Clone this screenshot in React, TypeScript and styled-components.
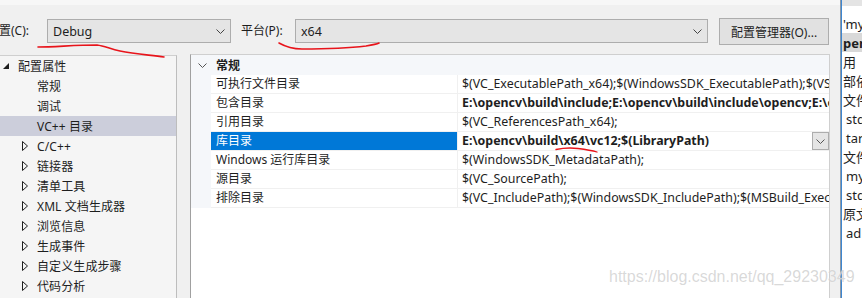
import React from "react";
import styled, { createGlobalStyle } from "styled-components";

const FONT = `"Noto Sans", "Noto Sans CJK SC", sans-serif`;

const Global = createGlobalStyle`
  html, body { margin: 0; padding: 0; background: #f0f0f0; }
  body { font-family: ${FONT}; }
`;

const Page = styled.div`
  position: relative;
  width: 862px;
  height: 298px;
  overflow: hidden;
  display: flex;
  background: #f0f0f0;
  font-family: ${FONT};
  font-size: 12px;
  color: #1e1e1e;
`;

const Main = styled.div`
  width: 840px;
  flex: none;
  display: flex;
  flex-direction: column;
`;

const TopStrip = styled.div`
  height: 5px;
  background: #f7f7f7;
`;

const TopBar = styled.div`
  height: 49px;
  box-sizing: border-box;
  padding-top: 14px;
  display: flex;
  align-items: flex-start;
`;

const Label = styled.div<{ $ml: number; $w: number }>`
  margin-left: ${(p) => p.$ml}px;
  width: ${(p) => p.$w}px;
  flex: none;
  height: 24px;
  line-height: 24px;
  white-space: nowrap;
`;

const Combo = styled.div<{ $w: number }>`
  width: ${(p) => p.$w}px;
  flex: none;
  height: 24px;
  box-sizing: border-box;
  border: 1px solid #adadad;
  background: #e5e5e5;
  display: flex;
  align-items: center;
  padding: 0 5px 0 5px;
  font-size: 12.5px;
`;

const ComboText = styled.span`
  flex: 1;
`;

const Button = styled.div<{ $ml: number }>`
  margin-left: ${(p) => p.$ml}px;
  margin-top: -1px;
  width: 110px;
  height: 27px;
  flex: none;
  box-sizing: border-box;
  border: 1px solid #adadad;
  background: #e1e1e1;
  display: flex;
  align-items: center;
  justify-content: center;
  white-space: nowrap;
`;

const Body = styled.div`
  display: flex;
  align-items: flex-start;
  height: 244px;
`;

const TreePanel = styled.div`
  margin-top: 1px;
  width: 177px;
  height: 243px;
  flex: none;
  box-sizing: border-box;
  border-top: 1px solid #cfcfcf;
  border-right: 1px solid #bdbdbd;
  background: #f5f5f5;
`;

const TreeRow = styled.div<{ $level: number; $selected?: boolean }>`
  height: 20px;
  display: flex;
  align-items: center;
  padding-left: ${(p) => (p.$level === 0 ? 3 : 22)}px;
  background: ${(p) => (p.$selected ? "#cccedb" : "transparent")};
  white-space: nowrap;
  letter-spacing: 0.1px;
`;

const Toggle = styled.span`
  width: 15px;
  flex: none;
  display: flex;
  align-items: center;
`;

const GridPanel = styled.div`
  margin-left: 13px;
  width: 640px;
  height: 244px;
  flex: none;
  box-sizing: border-box;
  border: 1px solid #cfcfcf;
  border-left-color: #a0a0a0;
  border-bottom: none;
  background: #ffffff;
  display: flex;
  flex-direction: column;
`;

const CategoryRow = styled.div`
  height: 20px;
  display: flex;
  align-items: center;
  background: #f5f7fa;
  font-weight: 700;
`;

const CategoryToggle = styled.span`
  width: 25px;
  flex: none;
  display: flex;
  justify-content: center;
  padding-right: 2px;
  box-sizing: border-box;
`;

const PropRow = styled.div`
  height: 19px;
  display: grid;
  grid-template-columns: 20px 247px 1fr;
  box-sizing: border-box;
`;

const Gutter = styled.div`
  background: #f5f7fa;
`;

const NameCell = styled.div<{ $selected?: boolean }>`
  box-sizing: border-box;
  padding-left: 5px;
  border-right: 1px solid #f0f0f0;
  border-bottom: 1px solid #f0f0f0;
  background: ${(p) => (p.$selected ? "#0078d7" : "#fff")};
  color: ${(p) => (p.$selected ? "#fff" : "#1e1e1e")};
  line-height: 18px;
  white-space: nowrap;
  overflow: hidden;
`;

const ValueCell = styled.div<{ $bold?: boolean }>`
  box-sizing: border-box;
  padding-left: 4px;
  border-bottom: 1px solid #f0f0f0;
  display: flex;
  align-items: center;
  overflow: hidden;
  font-size: 12.4px;
  font-weight: ${(p) => (p.$bold ? 700 : 400)};
  min-width: 0;
`;

const ValueText = styled.span`
  flex: 1;
  white-space: nowrap;
  overflow: hidden;
  line-height: 18px;
`;

const DropButton = styled.div`
  width: 17px;
  height: 18px;
  flex: none;
  box-sizing: border-box;
  border: 1px solid #adadad;
  background: #e5e5e5;
  display: flex;
  align-items: center;
  justify-content: center;
`;

const Divider = styled.div`
  width: 2px;
  flex: none;
  height: 298px;
  border-left: 1px solid #8e9aa8;
  background: #3d86d0;
  box-sizing: border-box;
`;

const SidePane = styled.div`
  width: 20px;
  flex: none;
  height: 298px;
  background: #ffffff;
  display: flex;
  flex-direction: column;
  overflow: hidden;
`;

const SideHeader = styled.div`
  height: 14px;
  flex: none;
  background: linear-gradient(#e4e4e4 0 6px, #ffffff 6px);
`;

const SideRow = styled.div<{ $indent?: boolean; $strong?: boolean }>`
  height: 19px;
  flex: none;
  display: flex;
  align-items: center;
  padding-left: ${(p) => (p.$indent ? 4 : 1)}px;
  white-space: nowrap;
  overflow: hidden;
  font-size: 13px;
  font-weight: ${(p) => (p.$strong ? 700 : 400)};
  background: ${(p) => (p.$strong ? "#d9d9d9" : "transparent")};
`;

const Watermark = styled.div`
  position: absolute;
  left: 609px;
  top: 269px;
  font-family: "Liberation Sans", Arial, sans-serif;
  font-size: 16px;
  line-height: 16px;
  color: rgba(170, 170, 170, 0.45);
  text-shadow: 0 0 1px rgba(255, 255, 255, 0.9);
  white-space: nowrap;
  pointer-events: none;
`;

const Ink = styled.svg`
  position: absolute;
  left: 0;
  top: 0;
  pointer-events: none;
`;

const Chevron = ({ w = 9, color = "#444" }: { w?: number; color?: string }) => (
  <svg width={w} height={5} viewBox="0 0 9 5">
    <polyline points="0.5,0.5 4.5,4.5 8.5,0.5" fill="none" stroke={color} strokeWidth="1" />
  </svg>
);

const ExpandedTri = () => (
  <svg width="6" height="6" viewBox="0 0 6 6">
    <polygon points="6,0 6,6 0,6" fill="#1e1e1e" />
  </svg>
);

const CollapsedTri = () => (
  <svg width="6" height="10" viewBox="0 0 6 10">
    <polygon points="0.5,0.5 5.5,5 0.5,9.5" fill="none" stroke="#1e1e1e" strokeWidth="1" />
  </svg>
);

const treeItems: { label: string; level: number; kind: "open" | "closed" | "leaf"; selected?: boolean }[] = [
  { label: "配置属性", level: 0, kind: "open" },
  { label: "常规", level: 1, kind: "leaf" },
  { label: "调试", level: 1, kind: "leaf" },
  { label: "VC++ 目录", level: 1, kind: "leaf", selected: true },
  { label: "C/C++", level: 1, kind: "closed" },
  { label: "链接器", level: 1, kind: "closed" },
  { label: "清单工具", level: 1, kind: "closed" },
  { label: "XML 文档生成器", level: 1, kind: "closed" },
  { label: "浏览信息", level: 1, kind: "closed" },
  { label: "生成事件", level: 1, kind: "closed" },
  { label: "自定义生成步骤", level: 1, kind: "closed" },
  { label: "代码分析", level: 1, kind: "closed" },
];

const props: { name: string; value: string; bold?: boolean; selected?: boolean }[] = [
  { name: "可执行文件目录", value: "$(VC_ExecutablePath_x64);$(WindowsSDK_ExecutablePath);$(VS_ExecutablePath);$(MSBuild_ExecutablePath);$(FxCopDir);$(PATH);" },
  { name: "包含目录", value: "E:\\opencv\\build\\include;E:\\opencv\\build\\include\\opencv;E:\\opencv\\build\\include\\opencv2;$(IncludePath)", bold: true },
  { name: "引用目录", value: "$(VC_ReferencesPath_x64);" },
  { name: "库目录", value: "E:\\opencv\\build\\x64\\vc12;$(LibraryPath)", bold: true, selected: true },
  { name: "Windows 运行库目录", value: "$(WindowsSDK_MetadataPath);" },
  { name: "源目录", value: "$(VC_SourcePath);" },
  { name: "排除目录", value: "$(VC_IncludePath);$(WindowsSDK_IncludePath);$(MSBuild_ExecutablePath);$(VC_LibraryPath_x64);" },
];

const sideItems: { t: string; indent?: boolean; strong?: boolean }[] = [
  { t: "'my_" },
  { t: "pen", strong: true },
  { t: "用" },
  { t: "部依" },
  { t: "文件" },
  { t: "std", indent: true },
  { t: "tar", indent: true },
  { t: "文件" },
  { t: "my", indent: true },
  { t: "std", indent: true },
  { t: "原文" },
  { t: "adM", indent: true },
];

export default function App() {
  return (
    <>
      <Global />
      <Page>
        <Main>
          <TopStrip />
          <TopBar>
            <Label $ml={-13} $w={60}>配置(C):</Label>
            <Combo $w={184}>
              <ComboText>Debug</ComboText>
              <Chevron />
            </Combo>
            <Label $ml={10} $w={54}>平台(P):</Label>
            <Combo $w={413}>
              <ComboText>x64</ComboText>
              <Chevron />
            </Combo>
            <Button $ml={11}>配置管理器(O)...</Button>
          </TopBar>
          <Body>
            <TreePanel>
              {treeItems.map((it) => (
                <TreeRow key={it.label} $level={it.level} $selected={it.selected}>
                  <Toggle>
                    {it.kind === "open" && <ExpandedTri />}
                    {it.kind === "closed" && <CollapsedTri />}
                  </Toggle>
                  {it.label}
                </TreeRow>
              ))}
            </TreePanel>
            <GridPanel>
              <CategoryRow>
                <CategoryToggle>
                  <Chevron w={9} color="#555" />
                </CategoryToggle>
                常规
              </CategoryRow>
              {props.map((p) => (
                <PropRow key={p.name}>
                  <Gutter />
                  <NameCell $selected={p.selected}>{p.name}</NameCell>
                  <ValueCell $bold={p.bold}>
                    <ValueText>{p.value}</ValueText>
                    {p.selected && (
                      <DropButton>
                        <Chevron w={9} color="#555" />
                      </DropButton>
                    )}
                  </ValueCell>
                </PropRow>
              ))}
            </GridPanel>
          </Body>
        </Main>
        <Divider />
        <SidePane>
          <SideHeader />
          {sideItems.map((s, i) => (
            <SideRow key={i} $indent={s.indent} $strong={s.strong}>
              {s.t}
            </SideRow>
          ))}
        </SidePane>
        <Watermark>https://blog.csdn.net/qq_29230349</Watermark>
        <Ink width="862" height="298" viewBox="0 0 862 298">
          <path
            d="M38 47 C 55 47, 75 45, 97 45 C 105 46, 110 49, 120 51 C 135 54, 150 55, 164 57"
            fill="none"
            stroke="#e8141b"
            strokeWidth="1.6"
            strokeLinecap="round"
          />
          <path
            d="M279 43 C 286 47, 292 49, 302 49 C 325 49, 350 48, 366 46 C 372 45, 377 44, 379 43"
            fill="none"
            stroke="#e8141b"
            strokeWidth="1.6"
            strokeLinecap="round"
          />
          <path
            d="M556 149.5 C 563 148, 570 147.5, 578 148.5 C 586 149.5, 592 150.5, 597 152"
            fill="none"
            stroke="#e8141b"
            strokeWidth="1.3"
            strokeLinecap="round"
          />
        </Ink>
      </Page>
    </>
  );
}
